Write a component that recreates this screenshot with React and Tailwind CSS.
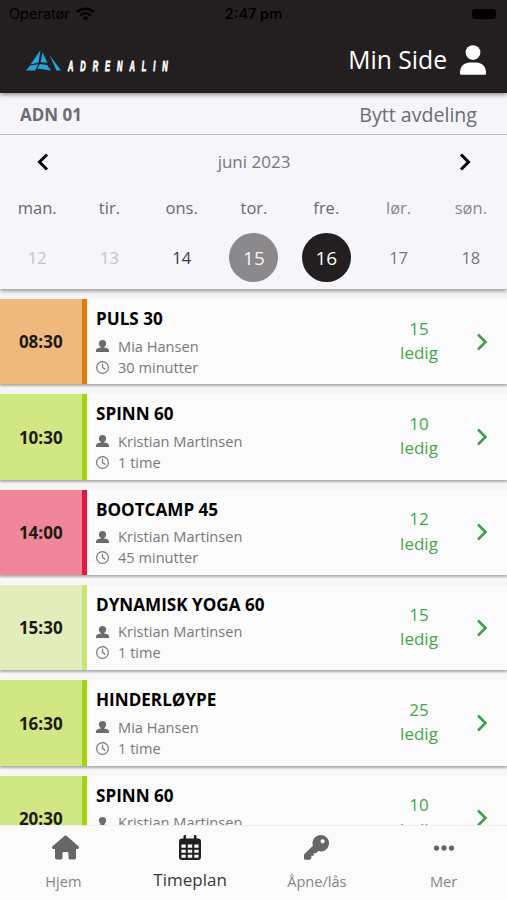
import { FaEllipsis, FaHouse, FaRegClock } from 'react-icons/fa6'
import clsx from 'clsx'

const days = [
  { name: 'man.', date: 12, state: 'past' },
  { name: 'tir.', date: 13, state: 'past' },
  { name: 'ons.', date: 14, state: 'dark' },
  { name: 'tor.', date: 15, state: 'today' },
  { name: 'fre.', date: 16, state: 'selected' },
  { name: 'lør.', date: 17, state: 'weekend' },
  { name: 'søn.', date: 18, state: 'weekend' },
]

const classes = [
  { time: '08:30', title: 'PULS 30', trainer: 'Mia Hansen', duration: '30 minutter', free: 15, color: 'bg-[#efb97e] border-[#e07c0b]' },
  { time: '10:30', title: 'SPINN 60', trainer: 'Kristian Martinsen', duration: '1 time', free: 10, color: 'bg-[#d0e783] border-[#a2d40f]' },
  { time: '14:00', title: 'BOOTCAMP 45', trainer: 'Kristian Martinsen', duration: '45 minutter', free: 12, color: 'bg-[#f0869a] border-[#e5173f]' },
  { time: '15:30', title: 'DYNAMISK YOGA 60', trainer: 'Kristian Martinsen', duration: '1 time', free: 15, color: 'bg-[#e1edba] border-[#c9e377]' },
  { time: '16:30', title: 'HINDERLØYPE', trainer: 'Mia Hansen', duration: '1 time', free: 25, color: 'bg-[#d0e783] border-[#a2d40f]' },
  { time: '20:30', title: 'SPINN 60', trainer: 'Kristian Martinsen', duration: '1 time', free: 10, color: 'bg-[#d0e783] border-[#a2d40f]' },
]

const tabs = [
  { label: 'Hjem', icon: FaHouse, size: 'ml-[5px] h-[25px] w-[27px]' },
  { label: 'Timeplan', icon: CalendarIcon, size: 'h-[25px] w-[22px]', active: true },
  { label: 'Åpne/lås', icon: KeyIcon, size: 'h-[25px] w-[25px]' },
  { label: 'Mer', icon: FaEllipsis, size: 'h-[24px] w-[24px]' },
]

function CalendarIcon({ className }) {
  return (
    <svg viewBox="0 0 22 25" className={className}>
      <path fill="currentColor" d="M4.500 1.200a1.200 1.200 0 0 1 2.600 0V3.500h7.800V1.200a1.200 1.200 0 0 1 2.600 0V3.500H19a3 3 0 0 1 3 3V22a3 3 0 0 1-3 3H3a3 3 0 0 1-3-3V6.500a3 3 0 0 1 3-3h1.500z" />
      <path fill="#fbfbfb" d="M2.400 9.600h4.300v3.100H2.400zM8.800 9.600h4.400v3.100H8.800zM15.300 9.600h4.300v3.100h-4.300zM2.400 14.700h4.300v3.100H2.400zM8.800 14.700h4.400v3.100H8.800zM15.300 14.700h4.300v3.100h-4.300zM2.400 19.800h4.300v2.900H3a.6.6 0 0 1-.6-.6zM8.800 19.800h4.400v2.900H8.800zM15.300 19.800h4.300v2.300a.6.6 0 0 1-.6.6h-3.700z" />
    </svg>
  )
}

function KeyIcon({ className }) {
  return (
    <svg viewBox="0 0 25 25" fill="currentColor" fillRule="evenodd" className={className}>
      <path d="M16.700 0a8.200 8.200 0 1 1-2.400 16L12 18.300H9.700v2.400H7.300v2.500L5.800 24.700H1.300A1.300 1.300 0 0 1 0 23.400V19.600L8.900 10.700A8.200 8.200 0 0 1 16.700 0zM18.600 4.200a2.100 2.100 0 1 0 0 4.200 2.100 2.100 0 0 0 0-4.200z" />
    </svg>
  )
}

function PersonIcon({ className }) {
  return (
    <svg viewBox="0 0 26 30" fill="currentColor" className={className}>
      <circle cx="13" cy="7.6" r="7.4" />
      <path d="M0 27.500C0 21 4.500 17.500 10 17.500h6c5.500 0 10 3.500 10 10V28.500a1.300 1.300 0 0 1-1.300 1.300H1.300A1.300 1.300 0 0 1 0 28.500z" />
    </svg>
  )
}

function TrainerIcon({ className }) {
  return (
    <svg viewBox="0 0 13 12" fill="currentColor" className={className}>
      <ellipse cx="6.5" cy="3.600" rx="3.600" ry="3.600" />
      <path d="M5 6.500h3v1l2.600.5c1.600.4 2.400 1.400 2.400 2.800V12H0v-1.200c0-1.400.8-2.400 2.400-2.800L5 7.500z" />
    </svg>
  )
}

function WifiIcon({ className }) {
  return (
    <svg viewBox="0 0 19 14" fill="none" stroke="currentColor" strokeWidth="2.500" className={className}>
      <path d="M1 5.200a12.200 12.200 0 0 1 17 0M4.200 8.500a7.600 7.600 0 0 1 10.600 0" />
      <path d="m9.500 13.800 2.900-3a4.200 4.200 0 0 0-5.800 0z" fill="currentColor" stroke="none" />
    </svg>
  )
}

function Chevron({ left, className }) {
  return (
    <svg viewBox="0 0 12 18" fill="none" stroke="currentColor" className={className}>
      <path d={left ? 'M10 1.500 2.500 9l7.500 7.500' : 'M2 1.500 9.500 9 2 16.500'} />
    </svg>
  )
}

function StatusBar() {
  return (
    <div className="grid h-7 grid-cols-3 items-center px-[9px] font-['Inter'] text-[14.500px] text-black">
      <div className="flex items-center gap-[6px]">
        <span>Operatør</span>
        <WifiIcon className="h-[14px] w-[19px]" />
      </div>
      <span className="text-center font-semibold">2:47 pm</span>
      <div className="mr-[2px] h-[10px] w-[24px] justify-self-end rounded-[3px] bg-black" />
    </div>
  )
}

function Logo() {
  return (
    <div className="flex items-start">
      <svg viewBox="0 0 36 21" fill="#21a6dc" className="h-[21px] w-[36px]">
        <path d="M14.500 0 4.500 14.500 12.500 12.500z" />
        <path d="M16.500 2.500 14.500 12.200l7 .6z" />
        <path d="M3.800 15.800 0 20.500h9l3.500-6.300z" />
        <path d="M14 14 11.500 18.500l13.500 2-4-5.500z" />
        <path d="m23.500 5 11.500 15.500h-4.500z" />
      </svg>
      <span className="mt-[7px] ml-[6px] h-[14px] w-[106px] origin-left scale-x-[0.5] font-['Liberation_Sans'] text-[15px] leading-[17px] font-bold tracking-[13.900px] whitespace-nowrap text-white italic [-webkit-text-stroke:0.900px_white]">
        ADRENALIN
      </span>
    </div>
  )
}

function Day({ name, date, state }) {
  return (
    <div className="flex flex-col items-center">
      <span className={clsx('text-[16.500px] leading-6', state === 'weekend' ? 'text-[#8a8a8d]' : 'text-[#69696c]')}>{name}</span>
      <div
        className={clsx(
          'mt-[13px] flex h-[49px] w-[49px] items-center justify-center rounded-full pt-px',
          state === 'past' && 'text-[16.500px] text-[#c4c4c9]',
          state === 'dark' && 'text-[16.500px] text-[#3c3c3e]',
          state === 'weekend' && 'text-[16.500px] text-[#77777a]',
          state === 'today' && 'bg-[#8b898b] text-[19px] text-[#f4f4f7]',
          state === 'selected' && 'bg-[#231f20] text-[19px] text-white',
        )}
      >
        {date}
      </div>
    </div>
  )
}

function ClassCard({ item }) {
  return (
    <div className="flex h-[85.330px] shrink-0 bg-[#fbfbfb] shadow-[0_2px_2px_rgba(0,0,0,0.3)]">
      <div className={clsx('flex w-[86.500px] items-center justify-center border-r-[5px] pt-px text-[17px] font-bold text-[#1d1b16]', item.color)}>
        {item.time}
      </div>
      <div className="flex-1 pt-[7px] pl-[9.500px]">
        <div className="text-[17.100px] leading-[25px] font-bold text-black">{item.title}</div>
        <div className="mt-[4.500px] flex items-center text-[14.600px] leading-[21px] text-[#79797a]">
          <TrainerIcon className="mr-[9px] h-3 w-[13px] text-[#6c6c6c]" />
          {item.trainer}
        </div>
        <div className="flex items-center text-[14.600px] leading-[21px] text-[#79797a]">
          <FaRegClock className="mr-[9px] h-[13px] w-[13px]" />
          {item.duration}
        </div>
      </div>
      <div className="flex w-[58px] flex-col items-center justify-center pb-px text-[17px] leading-[24.500px] text-[#46a54a]">
        <span>{item.free}</span>
        <span>ledig</span>
      </div>
      <div className="flex w-[59px] items-center justify-center pl-[9px]">
        <Chevron className="h-[18px] w-3 stroke-[2.600] text-[#3fa046]" />
      </div>
    </div>
  )
}

export default function App() {
  return (
    <div className="flex h-[900px] w-full flex-col overflow-hidden bg-[#f6f6f7] font-['Open_Sans','Noto_Sans',sans-serif]">
      <header className="relative z-20 h-[93px] shrink-0 bg-[#231f20] shadow-[0_2px_4px_rgba(0,0,0,0.4)]">
        <StatusBar />
        <div className="flex h-16 items-center justify-between pr-[21px] pl-[26px]">
          <Logo />
          <div className="flex items-center gap-[13px] text-white">
            <span className="text-[24.700px] leading-8">Min Side</span>
            <PersonIcon className="h-[30px] w-[26px]" />
          </div>
        </div>
      </header>

      <section className="relative z-10 h-[196px] shrink-0 bg-[#f5f5fa] shadow-[0_2px_4px_rgba(0,0,0,0.4)]">
        <div className="flex h-[42px] items-center justify-between border-b border-[#bdbdc1] pt-[3px] pr-[30px] pl-5 text-[#6d6d70]">
          <span className="text-[17px] font-bold">ADN 01</span>
          <span className="text-[19.600px]">Bytt avdeling</span>
        </div>
        <div className="flex h-[54px] items-center justify-between pr-[36px] pl-[37px] text-black">
          <Chevron left className="h-[18px] w-3 stroke-3" />
          <span className="text-[17px] text-[#77777a]">juni 2023</span>
          <Chevron className="h-[18px] w-3 stroke-3" />
        </div>
        <div className="grid grid-cols-7 pt-[7px] pl-px">
          {days.map((day) => (
            <Day key={day.date} {...day} />
          ))}
        </div>
      </section>

      <main className="flex min-h-0 flex-1 flex-col gap-[10px] overflow-hidden pt-[10px]">
        {classes.map((item) => (
          <ClassCard key={item.time} item={item} />
        ))}
      </main>

      <nav className="relative z-10 grid h-[75px] shrink-0 grid-cols-4 border-t border-[#eeeef0] bg-[#fbfbfb]">
        {tabs.map(({ label, icon: Icon, size, active }) => (
          <div key={label} className={clsx('flex flex-col items-center pt-[9px]', active ? 'text-[#231f20]' : 'text-[#666]')}>
            <div className="flex h-[25px] items-center">
              <Icon className={size} />
            </div>
            <span className={clsx('leading-6', active ? 'mt-[8px] text-[17px] text-[#3a3738]' : 'mt-[9px] text-[14.600px] text-[#858585]')}>
              {label}
            </span>
          </div>
        ))}
      </nav>
    </div>
  )
}
